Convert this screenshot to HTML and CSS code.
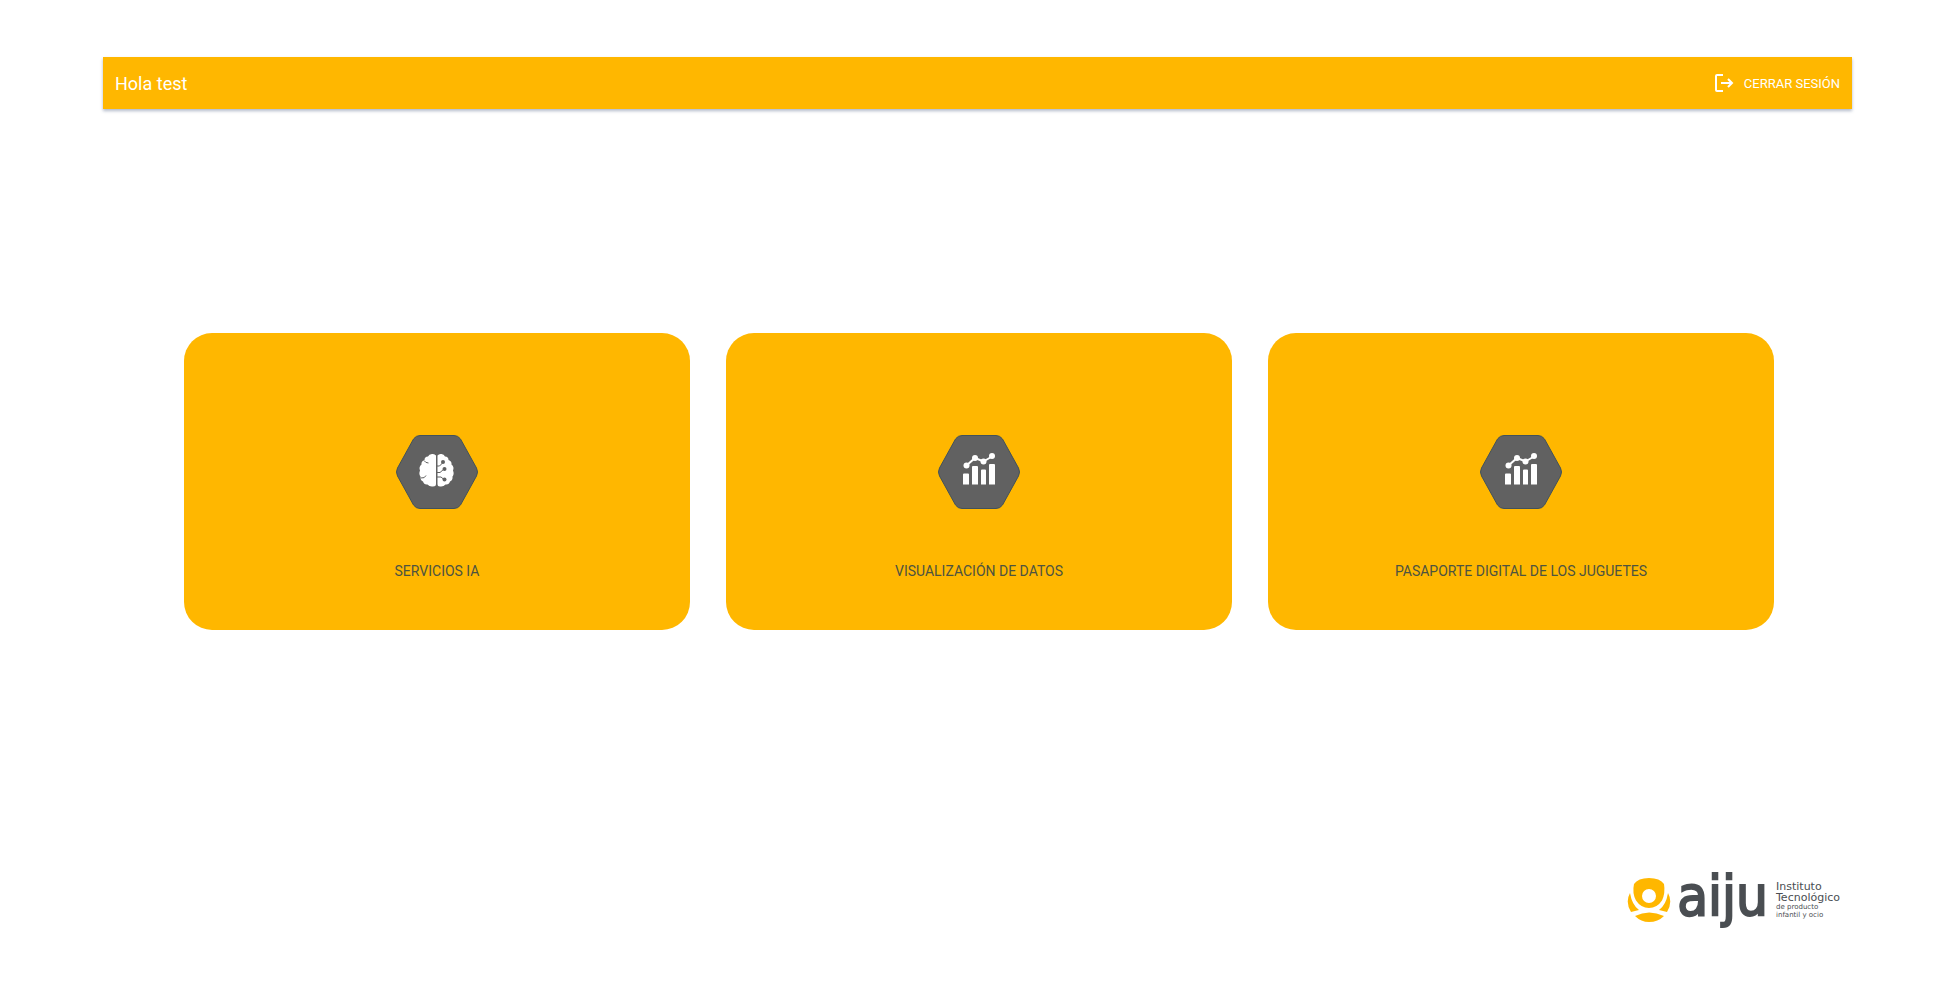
FILE: index.html
```html
<!DOCTYPE html>
<html lang="es">
<head>
<meta charset="utf-8">
<meta name="viewport" content="width=device-width, initial-scale=1">
<title>AIJU</title>
<link rel="stylesheet" href="styles.css">
</head>
<body>
<div class="page">
  <header class="topbar">
    <h1 class="greeting">Hola test</h1>
    <button class="logout" type="button">
      <svg class="logout-icon" viewBox="0 0 20 20" aria-hidden="true">
        <path d="M9 2H3Q2 2 2 3V17Q2 18 3 18H9M7 10H18M14 6L18 10L14 14"/>
      </svg>
      <span>CERRAR SESIÓN</span>
    </button>
  </header>

  <main class="cards">
    <button class="card" type="button">
      <svg class="hex" viewBox="0 0 82 74" aria-hidden="true">
        <path class="hex-shape" d="M24 .5H58Q62 .5 64.500 4L80.500 33Q82.500 37 80.500 41L64.500 70Q62 73.500 58 73.500H24Q20 73.500 17.500 70L1.500 41Q-.5 37 1.500 33L17.500 4Q20 .5 24 .5Z"/>
        <path class="ink" d="M40 20.500Q38.500 18.500 36 19Q33 19 32 21.500Q28.500 21.500 28.500 25Q25 26 25.500 29.500Q22.500 32 24 35.500Q22.500 39 24.500 41.500Q24 45 27 46.500Q28 50 31.500 49.500Q33.500 52 37 51.500Q40 51.500 40 49ZM41.500 20.500Q43 18.500 45.500 19Q48 19 49 21.500Q52.500 21.500 52.500 25Q56 26 55.500 29.500Q58.500 32 57 35.500Q58.500 39 56.500 41.500Q57 45 54 46.500Q53 50 49.500 49.500Q47.500 52 44 51.500Q41.500 51.500 41.500 49Z"/>
        <path class="cut" d="M28 25.500Q29.500 28 32.500 28M24.500 43Q29 43.500 30 40.500M41 31H43.500L47 27.500M41 37.500H44L48 34M41 42H45L48 44.500"/>
        <circle class="node" cx="47" cy="27" r="2"/><circle class="node" cx="48.500" cy="34" r="2"/><circle class="node" cx="48.500" cy="44.500" r="2"/>
      </svg>
      <span>SERVICIOS IA</span>
    </button>
    <button class="card" type="button">
      <svg class="hex" viewBox="0 0 82 74" aria-hidden="true">
        <path class="hex-shape" d="M24 .5H58Q62 .5 64.500 4L80.500 33Q82.500 37 80.500 41L64.500 70Q62 73.500 58 73.500H24Q20 73.500 17.500 70L1.500 41Q-.5 37 1.500 33L17.500 4Q20 .5 24 .5Z"/>
        <g id="chart">
          <path class="ink" d="M25 39.500Q25 38.500 26 38.500H30Q31 38.500 31 39.500V49.500H25ZM34 32Q34 31 35 31H39Q40 31 40 32V49.500H34ZM43 35.500Q43 34.500 44 34.500H47Q48 34.500 48 35.500V49.500H43ZM51 30Q51 29 52 29H56Q57 29 57 30V49.500H51Z"/>
          <path class="trend" d="M28.500 30.500L37 23L45.500 26.500L54 21.500"/>
          <circle class="ink" cx="28.500" cy="30.500" r="3"/><circle class="ink" cx="37" cy="23" r="3"/><circle class="ink" cx="45.500" cy="26.500" r="3"/><circle class="ink" cx="54" cy="21" r="3"/>
        </g>
      </svg>
      <span>VISUALIZACIÓN DE DATOS</span>
    </button>
    <button class="card" type="button">
      <svg class="hex" viewBox="0 0 82 74" aria-hidden="true">
        <path class="hex-shape" d="M24 .5H58Q62 .5 64.500 4L80.500 33Q82.500 37 80.500 41L64.500 70Q62 73.500 58 73.500H24Q20 73.500 17.500 70L1.500 41Q-.5 37 1.500 33L17.500 4Q20 .5 24 .5Z"/>
        <use href="#chart"/>
      </svg>
      <span>PASAPORTE DIGITAL DE LOS JUGUETES</span>
    </button>
  </main>

  <footer class="brand">
    <svg class="brand-mark" viewBox="0 0 44 44" aria-hidden="true">
      <path d="M22 0Q33 0 37 6Q38.500 15 35 22.500Q30 30 22 30Q14 30 9 22.500Q5 15 7 6Q11 0 22 0ZM22 11A7 7 0 0 0 22 25A7 7 0 0 0 22 11Z" fill-rule="evenodd"/>
      <path d="M3 15Q5 27 12 32L4 34Q-2 24 3 15ZM41 15Q39 27 32 32L40 34Q46 24 41 15Z"/>
      <path d="M8 38Q22 31 37 38Q31 44 22 44Q14 44 8 38Z"/>
    </svg>
    <span class="brand-name">aiju</span>
    <p class="tagline">
      <span class="tagline-main">Instituto<br>Tecnológico</span>
      <span class="tagline-sub">de producto<br>infantil y ocio</span>
    </p>
  </footer>
</div>
</body>
</html>
```
FILE: styles.css
```css
* {
  box-sizing: border-box;
}

body {
  margin: 0;
  background: #fff;
  font-family: Roboto, "Liberation Sans", sans-serif;
}

button {
  border: 0;
  font: inherit;
  cursor: pointer;
}

.page {
  display: flex;
  flex-direction: column;
  min-height: 100vh;
  padding: 57px 98px 68px 103px;
}

.topbar {
  display: flex;
  align-items: center;
  justify-content: space-between;
  height: 52px;
  padding: 0 12px;
  background: #ffb700;
  color: #fff;
  box-shadow: 0 2px 3px rgba(60, 80, 120, 0.4);
}

.greeting {
  margin: 0;
  font-size: 18px;
  font-weight: 400;
}

.logout {
  display: flex;
  align-items: center;
  gap: 10px;
  padding: 0;
  background: none;
  color: inherit;
  font-size: 13px;
}

.logout-icon {
  width: 20px;
  height: 20px;
  fill: none;
  stroke: currentColor;
  stroke-width: 2;
}

.cards {
  display: grid;
  grid-template-columns: repeat(3, minmax(0, 1fr));
  gap: 36px;
  margin: 224px 78px 0 81px;
}

.card {
  display: flex;
  flex-direction: column;
  align-items: center;
  gap: 52px;
  padding: 102px 16px 49px;
  border-radius: 28px;
  background: #ffb700;
  color: #4d5340;
  font-size: 14px;
  line-height: 20px;
}

.hex {
  width: 84px;
  height: 74px;
}

.hex-shape {
  fill: #616161;
  stroke: #42525a;
}

.ink {
  fill: #fff;
}

.node {
  fill: #616161;
}

.cut {
  fill: none;
  stroke: #616161;
  stroke-width: 1;
}

.trend {
  fill: none;
  stroke: #fff;
  stroke-width: 2;
}

.brand {
  display: flex;
  align-items: center;
  align-self: flex-end;
  margin-top: auto;
  margin-right: 12px;
  color: #4a4e52;
}

.brand-mark {
  width: 44px;
  height: 44px;
  fill: #ffb700;
}

.brand-name {
  margin: 0 8px 0 6px;
  padding-bottom: 8px;
  font-family: "DejaVu Sans Condensed", "DejaVu Sans", sans-serif;
  font-size: 56px;
  line-height: 56px;
  -webkit-text-stroke: 2px currentColor;
}

.tagline {
  margin: 0;
  font-family: "DejaVu Sans", sans-serif;
}

.tagline span {
  display: block;
}

.tagline-main {
  font-size: 11px;
  line-height: 11px;
}

.tagline-sub {
  font-size: 7px;
  line-height: 8px;
}
```
